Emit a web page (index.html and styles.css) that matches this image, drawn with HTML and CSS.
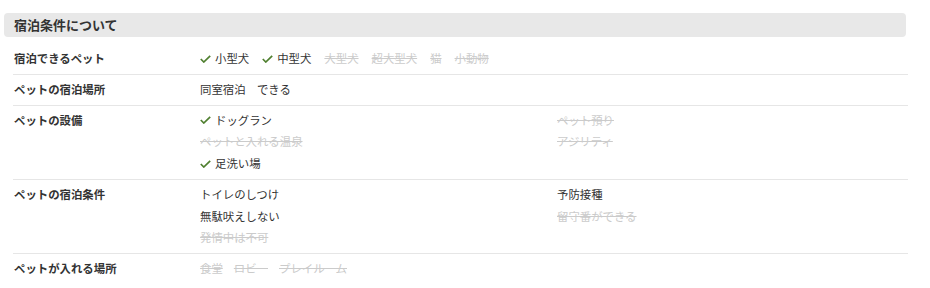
FILE: index.html
```html
<!DOCTYPE html>
<html lang="ja">
<head>
<meta charset="utf-8">
<link rel="stylesheet" href="styles.css">
</head>
<body>
<div class="section">
  <h2 class="section-title">宿泊条件について</h2>
  <div class="rows">
    <div class="row">
      <div class="label">宿泊できるペット</div>
      <div class="value inline">
        <span class="item ok"><svg class="check" viewBox="0 0 11 8"><polyline points="0.8,4 3.8,7 10.2,0.8"/></svg>小型犬</span>
        <span class="item ok"><svg class="check" viewBox="0 0 11 8"><polyline points="0.8,4 3.8,7 10.2,0.8"/></svg>中型犬</span>
        <span class="item ng">大型犬</span>
        <span class="item ng">超大型犬</span>
        <span class="item ng">猫</span>
        <span class="item ng">小動物</span>
      </div>
    </div>
    <div class="row">
      <div class="label">ペットの宿泊場所</div>
      <div class="value"><span class="item">同室宿泊　できる</span></div>
    </div>
    <div class="row">
      <div class="label">ペットの設備</div>
      <div class="value grid2">
        <span class="item ok"><svg class="check" viewBox="0 0 11 8"><polyline points="0.8,4 3.8,7 10.2,0.8"/></svg>ドッグラン</span>
        <span class="item ng">ペット預り</span>
        <span class="item ng">ペットと入れる温泉</span>
        <span class="item ng">アジリティ</span>
        <span class="item ok"><svg class="check" viewBox="0 0 11 8"><polyline points="0.8,4 3.8,7 10.2,0.8"/></svg>足洗い場</span>
      </div>
    </div>
    <div class="row">
      <div class="label">ペットの宿泊条件</div>
      <div class="value grid2">
        <span class="item">トイレのしつけ</span>
        <span class="item">予防接種</span>
        <span class="item">無駄吠えしない</span>
        <span class="item ng">留守番ができる</span>
        <span class="item ng">発情中は不可</span>
      </div>
    </div>
    <div class="row last">
      <div class="label">ペットが入れる場所</div>
      <div class="value inline wide">
        <span class="item ng">食堂</span>
        <span class="item ng">ロビー</span>
        <span class="item ng">プレイルーム</span>
      </div>
    </div>
  </div>
</div>
</body>
</html>
```

FILE: styles.css
```css
html, body {
  margin: 0;
  padding: 0;
  background: #ffffff;
}

body {
  font-family: "Noto Sans CJK JP", "Noto Sans", sans-serif;
  color: #333333;
  font-size: 11.4px;
}

.section {
  padding: 13px 0 0 4px;
  width: 904px;
}

.section-title {
  margin: 0;
  width: 902px;
  height: 24px;
  box-sizing: border-box;
  padding-left: 10px;
  background: #e8e8e8;
  border-radius: 4px;
  font-size: 13px;
  font-weight: bold;
  line-height: 24px;
  color: #333333;
}

.rows {
  margin: 7px 0 0 9px;
  width: 895px;
}

.row {
  display: grid;
  grid-template-columns: 187px 1fr;
  border-bottom: 1px solid #e6e6e6;
  padding: 4px 0;
}

.row.last {
  border-bottom: none;
}

.label {
  padding-left: 1px;
  font-weight: bold;
  line-height: 21.75px;
  color: #333333;
}

.value {
  line-height: 21.75px;
}

.inline {
  display: flex;
  column-gap: 13px;
}

.inline.wide {
  column-gap: 11px;
}

.grid2 {
  display: grid;
  grid-template-columns: 357px 1fr;
}

.item {
  display: flex;
  align-items: center;
  white-space: nowrap;
}

.item.ng {
  color: #cbcbcb;
  text-decoration: line-through;
}

.check {
  width: 11px;
  height: 8px;
  margin-right: 4px;
  fill: none;
  stroke: #4f7f2f;
  stroke-width: 1.7;
}
```
